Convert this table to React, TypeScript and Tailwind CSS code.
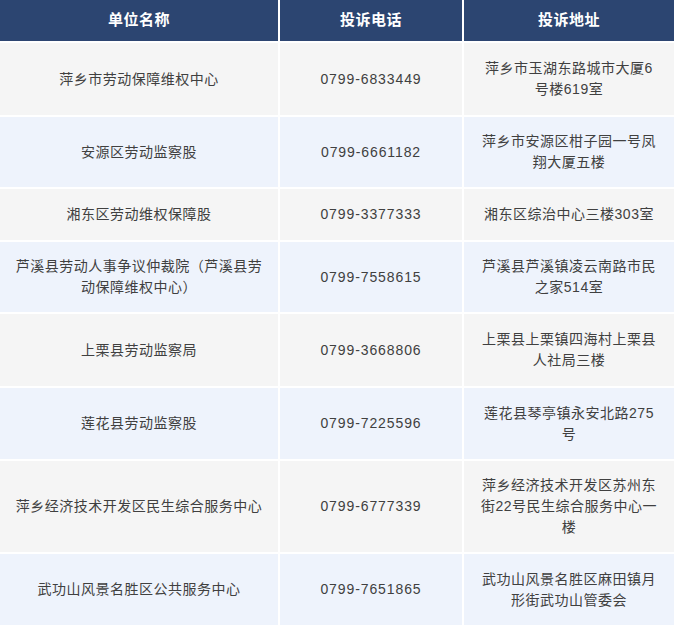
const rows: { name: string[]; phone: string; addr: string[]; h: string }[] = [
  { name: ["萍乡市劳动保障维权中心"], phone: "0799-6833449", addr: ["萍乡市玉湖东路城市大厦6", "号楼619室"], h: "h-[74px]" },
  { name: ["安源区劳动监察股"], phone: "0799-6661182", addr: ["萍乡市安源区柑子园一号凤", "翔大厦五楼"], h: "h-[72px]" },
  { name: ["湘东区劳动维权保障股"], phone: "0799-3377333", addr: ["湘东区综治中心三楼303室"], h: "h-[53px]" },
  { name: ["芦溪县劳动人事争议仲裁院（芦溪县劳", "动保障维权中心）"], phone: "0799-7558615", addr: ["芦溪县芦溪镇凌云南路市民", "之家514室"], h: "h-[72px]" },
  { name: ["上栗县劳动监察局"], phone: "0799-3668806", addr: ["上栗县上栗镇四海村上栗县", "人社局三楼"], h: "h-[74px]" },
  { name: ["莲花县劳动监察股"], phone: "0799-7225596", addr: ["莲花县琴亭镇永安北路275", "号"], h: "h-[73px]" },
  { name: ["萍乡经济技术开发区民生综合服务中心"], phone: "0799-6777339", addr: ["萍乡经济技术开发区苏州东", "街22号民生综合服务中心一", "楼"], h: "h-[93px]" },
  { name: ["武功山风景名胜区公共服务中心"], phone: "0799-7651865", addr: ["武功山风景名胜区麻田镇月", "形街武功山管委会"], h: "h-[73px]" },
];

function Lines({ lines }: { lines: string[] }) {
  return (
    <>
      {lines.map((l, i) => (
        <div key={i} className="whitespace-nowrap">
          {l}
        </div>
      ))}
    </>
  );
}

export default function App() {
  return (
    <div className="w-[679px] h-[633px] bg-white font-['Liberation_Sans','Noto_Sans_CJK_SC',sans-serif]">
      <table className="w-[674px] table-fixed border-collapse">
        <colgroup>
          <col className="w-[279px]" />
          <col className="w-[184px]" />
          <col className="w-[211px]" />
        </colgroup>
        <thead>
          <tr className="h-[42px] bg-[#2c4571] text-white text-[15px] font-bold tracking-[0.5px]">
            <th className="border-r-2 border-b-2 border-white">单位名称</th>
            <th className="border-r-2 border-b-2 border-white">投诉电话</th>
            <th className="border-b-2 border-white">投诉地址</th>
          </tr>
        </thead>
        <tbody className="text-[14px] leading-[21px] tracking-[0.5px] text-[#404040]">
          {rows.map((r, i) => (
            <tr key={i} className={`${r.h} ${i % 2 === 0 ? "bg-[#f5f5f5]" : "bg-[#eef3fc]"}`}>
              <td className="border-r-2 border-b-2 border-white text-center align-middle">
                <Lines lines={r.name} />
              </td>
              <td className="border-r-2 border-b-2 border-white text-center align-middle tracking-[0.9px]">
                {r.phone}
              </td>
              <td className="border-b-2 border-white text-center align-middle">
                <Lines lines={r.addr} />
              </td>
            </tr>
          ))}
        </tbody>
      </table>
    </div>
  );
}
